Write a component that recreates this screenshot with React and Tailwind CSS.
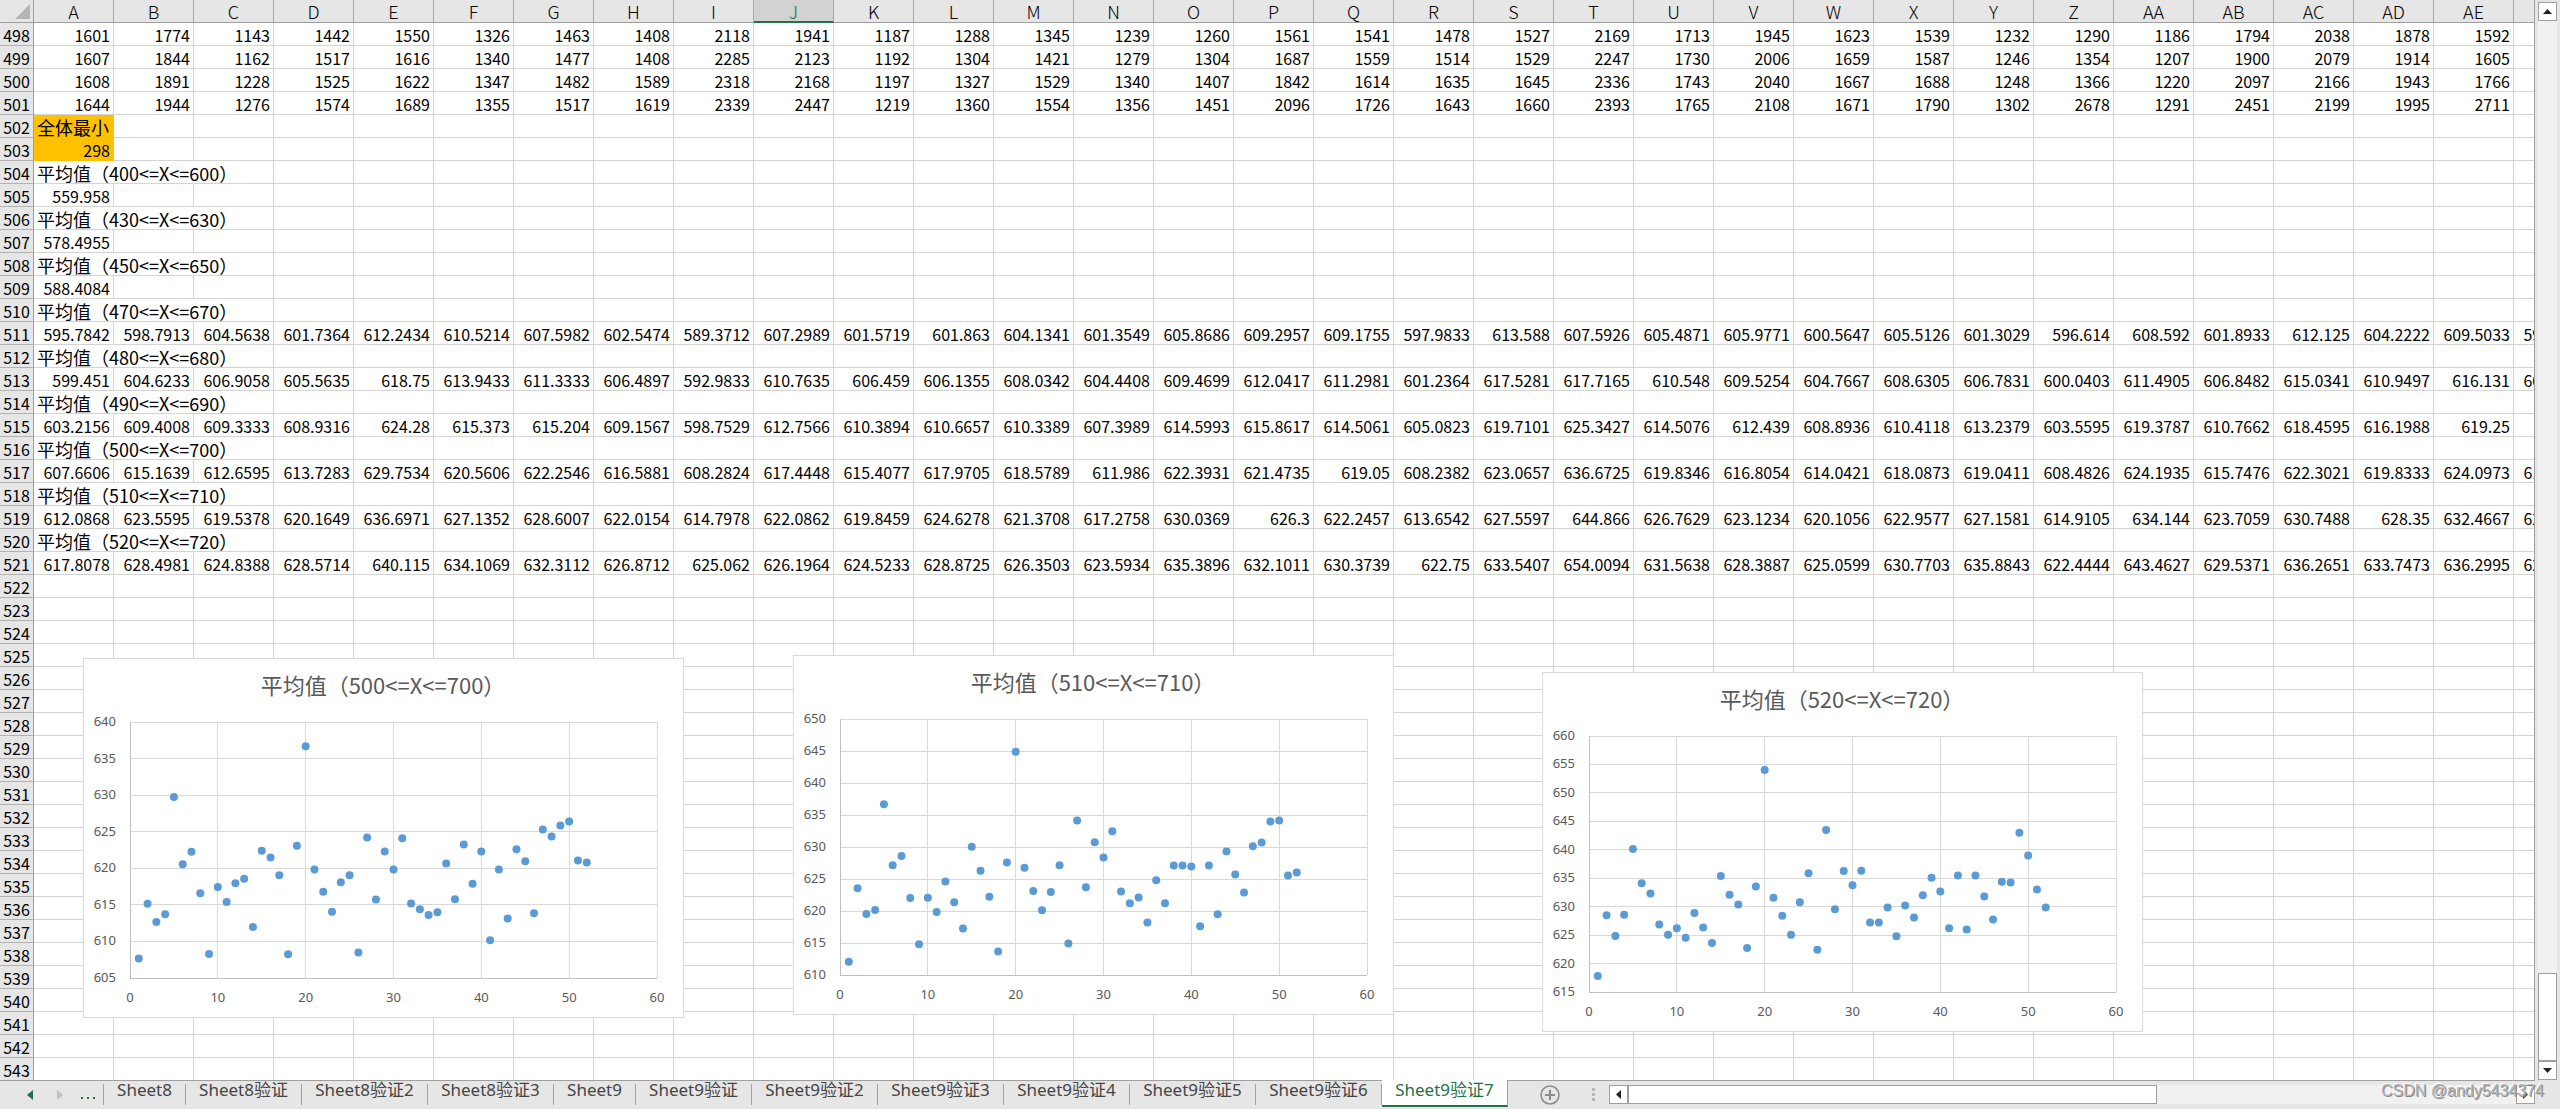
import { useState } from 'react';
import clsx from 'clsx';

const COLUMNS = [
  ...'ABCDEFGHIJKLMNOPQRSTUVWXYZ'.split(''),
  'AA', 'AB', 'AC', 'AD', 'AE', 'AF',
];

const FIRST_ROW = 498;
const LAST_ROW = 543;

const numbers = (line) => line.trim().split(/\s+/);

// Cell values, keyed by row number
const VALUES = {
  498: numbers('1601 1774 1143 1442 1550 1326 1463 1408 2118 1941 1187 1288 1345 1239 1260 1561 1541 1478 1527 2169 1713 1945 1623 1539 1232 1290 1186 1794 2038 1878 1592'),
  499: numbers('1607 1844 1162 1517 1616 1340 1477 1408 2285 2123 1192 1304 1421 1279 1304 1687 1559 1514 1529 2247 1730 2006 1659 1587 1246 1354 1207 1900 2079 1914 1605'),
  500: numbers('1608 1891 1228 1525 1622 1347 1482 1589 2318 2168 1197 1327 1529 1340 1407 1842 1614 1635 1645 2336 1743 2040 1667 1688 1248 1366 1220 2097 2166 1943 1766'),
  501: numbers('1644 1944 1276 1574 1689 1355 1517 1619 2339 2447 1219 1360 1554 1356 1451 2096 1726 1643 1660 2393 1765 2108 1671 1790 1302 2678 1291 2451 2199 1995 2711'),
  503: ['298'],
  505: ['559.958'],
  507: ['578.4955'],
  509: ['588.4084'],
  511: numbers('595.7842 598.7913 604.5638 601.7364 612.2434 610.5214 607.5982 602.5474 589.3712 607.2989 601.5719 601.863 604.1341 601.3549 605.8686 609.2957 609.1755 597.9833 613.588 607.5926 605.4871 605.9771 600.5647 605.5126 601.3029 596.614 608.592 601.8933 612.125 604.2222 609.5033 598.4125'),
  513: numbers('599.451 604.6233 606.9058 605.5635 618.75 613.9433 611.3333 606.4897 592.9833 610.7635 606.459 606.1355 608.0342 604.4408 609.4699 612.0417 611.2981 601.2364 617.5281 617.7165 610.548 609.5254 604.7667 608.6305 606.7831 600.0403 611.4905 606.8482 615.0341 610.9497 616.131 603.1524'),
  515: numbers('603.2156 609.4008 609.3333 608.9316 624.28 615.373 615.204 609.1567 598.7529 612.7566 610.3894 610.6657 610.3389 607.3989 614.5993 615.8617 614.5061 605.0823 619.7101 625.3427 614.5076 612.439 608.8936 610.4118 613.2379 603.5595 619.3787 610.7662 618.4595 616.1988 619.25'),
  517: numbers('607.6606 615.1639 612.6595 613.7283 629.7534 620.5606 622.2546 616.5881 608.2824 617.4448 615.4077 617.9705 618.5789 611.986 622.3931 621.4735 619.05 608.2382 623.0657 636.6725 619.8346 616.8054 614.0421 618.0873 619.0411 608.4826 624.1935 615.7476 622.3021 619.8333 624.0973 615.1951'),
  519: numbers('612.0868 623.5595 619.5378 620.1649 636.6971 627.1352 628.6007 622.0154 614.7978 622.0862 619.8459 624.6278 621.3708 617.2758 630.0369 626.3 622.2457 613.6542 627.5597 644.866 626.7629 623.1234 620.1056 622.9577 627.1581 614.9105 634.144 623.7059 630.7488 628.35 632.4667 623.0541'),
  521: numbers('617.8078 628.4981 624.8388 628.5714 640.115 634.1069 632.3112 626.8712 625.062 626.1964 624.5233 628.8725 626.3503 623.5934 635.3896 632.1011 630.3739 622.75 633.5407 654.0094 631.5638 628.3887 625.0599 630.7703 635.8843 622.4444 643.4627 629.5371 636.2651 633.7473 636.2995 627.2134'),
};

// Labels run over into the two empty cells on their right
const LABELS = {
  504: '平均值（400<=X<=600）',
  506: '平均值（430<=X<=630）',
  508: '平均值（450<=X<=650）',
  510: '平均值（470<=X<=670）',
  512: '平均值（480<=X<=680）',
  514: '平均值（490<=X<=690）',
  516: '平均值（500<=X<=700）',
  518: '平均值（510<=X<=710）',
  520: '平均值（520<=X<=720）',
};

const CHARTS = [
  {
    title: '平均值（500<=X<=700）',
    place: 'left-[83px] top-[658px]',
    min: 605,
    max: 640,
    points: [
      ...VALUES[517].slice(0, 31).map(Number),
      615.2, 614.4, 613.6, 614, 620.65, 615.75, 623.25, 617.9, 622.3, 610.15, 619.85,
      613.15, 622.6, 620.95, 613.85, 625.3, 624.35, 625.85, 626.4, 621.05, 620.8,
    ],
  },
  {
    title: '平均值（510<=X<=710）',
    place: 'left-[793px] top-[655px]',
    min: 610,
    max: 650,
    points: [
      ...VALUES[519].slice(0, 31).map(Number),
      623.05, 621.2, 622.1, 618.2, 624.8, 621.2, 627.1, 627.1, 626.95, 617.6, 627.1,
      619.5, 629.3, 625.7, 622.9, 630.1, 630.7, 634, 634.15, 625.55, 626,
    ],
  },
  {
    title: '平均值（520<=X<=720）',
    place: 'left-[1542px] top-[672px]',
    min: 615,
    max: 660,
    points: [
      ...VALUES[521].slice(0, 31).map(Number),
      627.2, 627.2, 629.85, 624.8, 630.2, 628.1, 632, 635.1, 632.65, 626.2, 635.5,
      626, 635.5, 631.8, 627.75, 634.4, 634.25, 643, 639, 633, 629.85,
    ],
  },
];

const TABS = [
  { name: 'Sheet8', width: 'w-[82px]' },
  { name: 'Sheet8验证', width: 'w-[116px]' },
  { name: 'Sheet8验证2', width: 'w-[126px]' },
  { name: 'Sheet8验证3', width: 'w-[126px]' },
  { name: 'Sheet9', width: 'w-[82px]' },
  { name: 'Sheet9验证', width: 'w-[116px]' },
  { name: 'Sheet9验证2', width: 'w-[126px]' },
  { name: 'Sheet9验证3', width: 'w-[126px]' },
  { name: 'Sheet9验证4', width: 'w-[126px]' },
  { name: 'Sheet9验证5', width: 'w-[126px]' },
  { name: 'Sheet9验证6', width: 'w-[126px]' },
  { name: 'Sheet9验证7', width: 'w-[126px]' },
];

// Plot area inside the 601 x 360 chart
const PLOT = { left: 46, top: 63, width: 527, height: 256 };

const ScatterChart = ({ title, place, min, max, points }) => {
  const toX = (value) => PLOT.left + (value / 60) * PLOT.width;
  const toY = (value) => PLOT.top + ((max - value) / (max - min)) * PLOT.height;

  const xTicks = [0, 10, 20, 30, 40, 50, 60];
  const yTicks = [];
  for (let tick = min; tick <= max; tick += 5) yTicks.push(tick);

  return (
    <svg
      width="601"
      height="360"
      role="img"
      aria-label={title}
      className={clsx('absolute border border-[#d9d9d9] bg-white', place)}
    >
      <text
        x="299"
        y="35"
        textAnchor="middle"
        className="fill-[#595959] font-['Noto_Sans_CJK_SC',sans-serif] text-[22px]"
      >
        {title}
      </text>

      <g stroke="#d9d9d9" shapeRendering="crispEdges">
        {yTicks.map((tick) => (
          <line key={tick} x1={PLOT.left} x2={PLOT.left + PLOT.width} y1={toY(tick)} y2={toY(tick)} />
        ))}
        {xTicks.map((tick) => (
          <line key={tick} x1={toX(tick)} x2={toX(tick)} y1={PLOT.top} y2={PLOT.top + PLOT.height} />
        ))}
      </g>
      <path
        d={`M${PLOT.left} ${PLOT.top}v${PLOT.height}h${PLOT.width}`}
        fill="none"
        stroke="#bfbfbf"
        shapeRendering="crispEdges"
      />

      <g className="fill-[#595959] font-['Noto_Sans',sans-serif] text-[13px]">
        {yTicks.map((tick) => (
          <text key={tick} x="32" y={toY(tick) + 4} textAnchor="end">{tick}</text>
        ))}
        {xTicks.map((tick) => (
          <text key={tick} x={toX(tick)} y="343" textAnchor="middle">{tick}</text>
        ))}
      </g>

      <g fill="#5b9bd5">
        {points.map((value, index) => (
          <circle key={index} cx={toX(index + 1)} cy={toY(value)} r="4" />
        ))}
      </g>
    </svg>
  );
};

const SheetRow = ({ row }) => {
  const values = VALUES[row] || [];
  const label = LABELS[row];
  const isLast = row === LAST_ROW;
  const line = isLast ? 'h-[22px] p-0 pt-[2px]' : 'h-[23px] border-b p-0 pt-[2px]';

  return (
    <tr>
      <th
        scope="row"
        className={clsx(line, 'border-r border-r-[#9f9f9f] border-b-[#b1b1b1] bg-[#e6e6e6] text-center font-normal')}
      >
        {row}
      </th>
      {label && (
        <td colSpan={3} className={clsx(line, 'border-r border-[#d4d4d4] pl-[3px] text-left text-lg leading-5')}>
          {label}
        </td>
      )}
      {COLUMNS.slice(label ? 3 : 0).map((column, index) => {
        if (column === 'A' && (row === 502 || row === 503)) {
          return (
            <td
              key={column}
              className={clsx(
                line,
                'border-r border-[#ffc000] bg-[#ffc000]',
                row === 502 ? 'pl-[3px] text-left text-lg leading-5' : 'pr-[3px] text-right'
              )}
            >
              {row === 502 ? '全体最小' : values[0]}
            </td>
          );
        }
        return (
          <td key={column} className={clsx(line, 'border-r border-[#d4d4d4] pr-[3px] text-right')}>
            {label ? null : values[index]}
          </td>
        );
      })}
    </tr>
  );
};

const Sheet = () => {
  const rows = [];
  for (let row = FIRST_ROW; row <= LAST_ROW; row++) rows.push(row);

  return (
    <div className="relative min-w-0 flex-1 overflow-hidden border-r border-[#9f9f9f] bg-white">
      <table className="w-[2594px] table-fixed border-separate border-spacing-0 text-base leading-5 whitespace-nowrap text-black">
        <colgroup>
          <col className="w-[34px]" />
          {COLUMNS.map((column) => <col key={column} className="w-[80px]" />)}
        </colgroup>
        <thead>
          <tr>
            <th className="h-[23px] border-r border-b border-[#9f9f9f] bg-[#e6e6e6] p-0">
              <button type="button" aria-label="Select all" className="flex h-[22px] w-full items-center justify-end pr-[3px]">
                <svg width="15" height="15" viewBox="0 0 15 15"><path d="M15 0v15H0z" fill="#b4b4b4" /></svg>
              </button>
            </th>
            {COLUMNS.map((column) => (
              <th
                key={column}
                scope="col"
                className={clsx(
                  'h-[23px] border-r border-r-[#ababab] p-0 text-lg leading-5 font-light',
                  column === 'J'
                    ? 'border-b-2 border-b-[#217346] bg-[#d2d2d2] text-[#217346]'
                    : 'border-b border-b-[#9f9f9f] bg-[#e6e6e6] text-black'
                )}
              >
                {column}
              </th>
            ))}
          </tr>
        </thead>
        <tbody>
          {rows.map((row) => <SheetRow key={row} row={row} />)}
        </tbody>
      </table>
      {CHARTS.map((chart) => <ScatterChart key={chart.title} {...chart} />)}
    </div>
  );
};

const ScrollButton = ({ label, d }) => (
  <button type="button" aria-label={label} className="flex size-[19px] shrink-0 items-center justify-center border border-[#9f9f9f] bg-white">
    <svg width="9" height="9" viewBox="0 0 9 9"><path d={d} fill="#222222" /></svg>
  </button>
);

const VerticalScrollbar = () => (
  <div className="flex w-[25px] shrink-0 flex-col pt-[2px] pr-[3px] pl-[3px]">
    <ScrollButton label="Scroll up" d="M4.500 2L9 7H0z" />
    <div className="flex flex-1 flex-col justify-end bg-[#f1f1f1]">
      <div className="h-[88px] border border-[#9f9f9f] bg-white" />
    </div>
    <ScrollButton label="Scroll down" d="M0 2h9L4.500 7z" />
  </div>
);

const TabBar = () => {
  const [active, setActive] = useState('Sheet9验证7');

  return (
    <div className="flex">
      <div className="relative flex h-[29px] min-w-0 flex-1 items-start border-t border-[#9f9f9f]">
        <div className="mt-[3px] flex h-[21px] w-[104px] shrink-0 items-center border-r border-[#9f9f9f] pl-[27px]">
          <button type="button" aria-label="Previous sheet">
            <svg width="6" height="10" viewBox="0 0 6 10"><path d="M6 0v10L0 5z" fill="#217346" /></svg>
          </button>
          <button type="button" aria-label="Next sheet" className="ml-6">
            <svg width="6" height="10" viewBox="0 0 6 10"><path d="M0 0v10l6-5z" fill="#c0c0c0" /></svg>
          </button>
          <button type="button" aria-label="More sheets" className="ml-[18px]">
            <svg width="14" height="10" viewBox="0 0 14 10"><path d="M0 7h2v2H0zM6 7h2v2H6zM12 7h2v2h-2z" fill="#217346" /></svg>
          </button>
        </div>
        <div role="tablist" className="flex shrink-0 items-start font-['Noto_Sans','Noto_Sans_CJK_SC',sans-serif] text-[17px] leading-5 whitespace-nowrap">
          {TABS.map(({ name, width }, index) => (
            <button
              key={name}
              type="button"
              role="tab"
              aria-selected={name === active}
              onClick={() => setActive(name)}
              className={clsx(
                'flex justify-center',
                width,
                name === active
                  ? '-mt-px h-[27px] border-r border-b-2 border-r-[#9f9f9f] border-b-[#217346] bg-white text-[#217346]'
                  : 'mt-[3px] h-[21px] text-[#444444]',
                name !== active && index < TABS.length - 1 && 'border-r border-[#9f9f9f]'
              )}
            >
              <span className={name === active ? 'mt-0' : '-mt-1'}>{name}</span>
            </button>
          ))}
        </div>
        <button type="button" aria-label="New sheet" className="mt-1 ml-8 shrink-0">
          <svg width="20" height="20" viewBox="0 0 20 20" fill="none" stroke="#8a8a8a">
            <circle cx="10" cy="10" r="9" strokeWidth="1.500" />
            <path d="M10 5v10M5 10h10" strokeWidth="2" />
          </svg>
        </button>
        <svg width="3" height="13" viewBox="0 0 3 13" className="mt-[7px] ml-8 shrink-0">
          <path d="M0 0h3v3H0zM0 5h3v3H0zM0 10h3v3H0z" fill="#b4b4b4" />
        </svg>
        <div className="mt-1 ml-[14px] flex h-[19px] min-w-0 flex-1 bg-[#f1f1f1]">
          <ScrollButton label="Scroll left" d="M7 0v9L2 4.500z" />
          <div className="flex min-w-0 flex-1">
            <div className="flex-[22] border border-[#9f9f9f] bg-white" />
            <div className="flex-[15]" />
          </div>
          <ScrollButton label="Scroll right" d="M2 0v9l5-4.500z" />
        </div>
      </div>
      <div className="w-[25px] shrink-0" />
    </div>
  );
};

const App = () => {
  return (
    <div className="relative w-full bg-[#e6e6e6] font-['Noto_Sans_CJK_SC',sans-serif]">
      <div className="flex">
        <Sheet />
        <VerticalScrollbar />
      </div>
      <TabBar />
      <div className="pointer-events-none absolute right-4 bottom-2 font-['Liberation_Sans',sans-serif] text-base leading-5 text-[#b4b4b4] [text-shadow:1px_1px_0_#888888,-1px_-1px_0_#ffffff]">
        CSDN @andy5434374
      </div>
    </div>
  );
};

export default App;
